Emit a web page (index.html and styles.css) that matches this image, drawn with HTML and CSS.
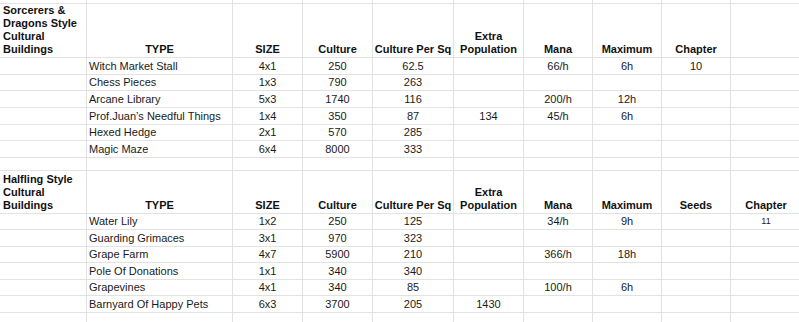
FILE: index.html
```html
<!DOCTYPE html>
<html lang="en">
<head>
<meta charset="utf-8">
<title>Cultural Buildings</title>
<link rel="stylesheet" href="styles.css">
</head>
<body>
<div class="sheet">
  <div class="c"></div><div class="c"></div><div class="c"></div><div class="c"></div><div class="c"></div><div class="c"></div><div class="c"></div><div class="c"></div><div class="c"></div><div class="c"></div>

  <div class="c h t">Sorcerers &amp; Dragons Style Cultural Buildings</div>
  <div class="c h n">TYPE</div>
  <div class="c h n">SIZE</div>
  <div class="c h n">Culture</div>
  <div class="c h n">Culture Per Sq</div>
  <div class="c h n wrap">Extra Population</div>
  <div class="c h n">Mana</div>
  <div class="c h n">Maximum</div>
  <div class="c h n">Chapter</div>
  <div class="c"></div>

  <div class="c"></div><div class="c">Witch Market Stall</div><div class="c n">4x1</div><div class="c n">250</div><div class="c n">62.5</div><div class="c"></div><div class="c n">66/h</div><div class="c n">6h</div><div class="c n">10</div><div class="c"></div>
  <div class="c"></div><div class="c">Chess Pieces</div><div class="c n">1x3</div><div class="c n">790</div><div class="c n">263</div><div class="c"></div><div class="c"></div><div class="c"></div><div class="c"></div><div class="c"></div>
  <div class="c"></div><div class="c">Arcane Library</div><div class="c n">5x3</div><div class="c n">1740</div><div class="c n">116</div><div class="c"></div><div class="c n">200/h</div><div class="c n">12h</div><div class="c"></div><div class="c"></div>
  <div class="c"></div><div class="c">Prof.Juan’s Needful Things</div><div class="c n">1x4</div><div class="c n">350</div><div class="c n">87</div><div class="c n">134</div><div class="c n">45/h</div><div class="c n">6h</div><div class="c"></div><div class="c"></div>
  <div class="c"></div><div class="c">Hexed Hedge</div><div class="c n">2x1</div><div class="c n">570</div><div class="c n">285</div><div class="c"></div><div class="c"></div><div class="c"></div><div class="c"></div><div class="c"></div>
  <div class="c"></div><div class="c">Magic Maze</div><div class="c n">6x4</div><div class="c n">8000</div><div class="c n">333</div><div class="c"></div><div class="c"></div><div class="c"></div><div class="c"></div><div class="c"></div>

  <div class="c"></div><div class="c"></div><div class="c"></div><div class="c"></div><div class="c"></div><div class="c"></div><div class="c"></div><div class="c"></div><div class="c"></div><div class="c"></div>

  <div class="c h t">Halfling Style Cultural Buildings</div>
  <div class="c h n">TYPE</div>
  <div class="c h n">SIZE</div>
  <div class="c h n">Culture</div>
  <div class="c h n">Culture Per Sq</div>
  <div class="c h n wrap">Extra Population</div>
  <div class="c h n">Mana</div>
  <div class="c h n">Maximum</div>
  <div class="c h n">Seeds</div>
  <div class="c h n">Chapter</div>

  <div class="c"></div><div class="c">Water Lily</div><div class="c n">1x2</div><div class="c n">250</div><div class="c n">125</div><div class="c"></div><div class="c n">34/h</div><div class="c n">9h</div><div class="c"></div><div class="c n small">11</div>
  <div class="c"></div><div class="c">Guarding Grimaces</div><div class="c n">3x1</div><div class="c n">970</div><div class="c n">323</div><div class="c"></div><div class="c"></div><div class="c"></div><div class="c"></div><div class="c"></div>
  <div class="c"></div><div class="c">Grape Farm</div><div class="c n">4x7</div><div class="c n">5900</div><div class="c n">210</div><div class="c"></div><div class="c n">366/h</div><div class="c n">18h</div><div class="c"></div><div class="c"></div>
  <div class="c"></div><div class="c">Pole Of Donations</div><div class="c n">1x1</div><div class="c n">340</div><div class="c n">340</div><div class="c"></div><div class="c"></div><div class="c"></div><div class="c"></div><div class="c"></div>
  <div class="c"></div><div class="c">Grapevines</div><div class="c n">4x1</div><div class="c n">340</div><div class="c n">85</div><div class="c"></div><div class="c n">100/h</div><div class="c n">6h</div><div class="c"></div><div class="c"></div>
  <div class="c"></div><div class="c">Barnyard Of Happy Pets</div><div class="c n">6x3</div><div class="c n">3700</div><div class="c n">205</div><div class="c n">1430</div><div class="c"></div><div class="c"></div><div class="c"></div><div class="c"></div>

  <div class="c"></div><div class="c"></div><div class="c"></div><div class="c"></div><div class="c"></div><div class="c"></div><div class="c"></div><div class="c"></div><div class="c"></div><div class="c"></div>
</div>
</body>
</html>
```

FILE: styles.css
```css
html, body {
  margin: 0;
  padding: 0;
  background: #ffffff;
  overflow: hidden;
}

.sheet {
  display: grid;
  grid-template-columns: 86px 145px 69px 69px 80px 69px 68px 68px 68px 70px;
  grid-template-rows: 3px 53px 16px 15px 16px 16px 15px 16px 12px 42px 15px 16px 15px 16px 15px 16px 17px;
  gap: 1px;
  background: #e2e2e2;
  width: 800px;
  font-family: "Liberation Sans", Arial, sans-serif;
  font-size: 11px;
  color: #1a1a1a;
}

.c {
  background: #ffffff;
  display: flex;
  align-items: flex-end;
  padding: 0 2px 1px 2px;
  line-height: 13px;
  white-space: nowrap;
  overflow: hidden;
  min-width: 0;
}

.n {
  justify-content: center;
  text-align: center;
}

.h {
  font-weight: bold;
  color: #111111;
}

.h.n {
  padding-left: 0;
  padding-right: 0;
  overflow: visible;
}

.wrap,
.t {
  white-space: normal;
}

.t {
  padding-left: 3px;
  text-align: left;
}

.small {
  font-size: 9px;
  align-items: center;
  padding-bottom: 0;
}
```
